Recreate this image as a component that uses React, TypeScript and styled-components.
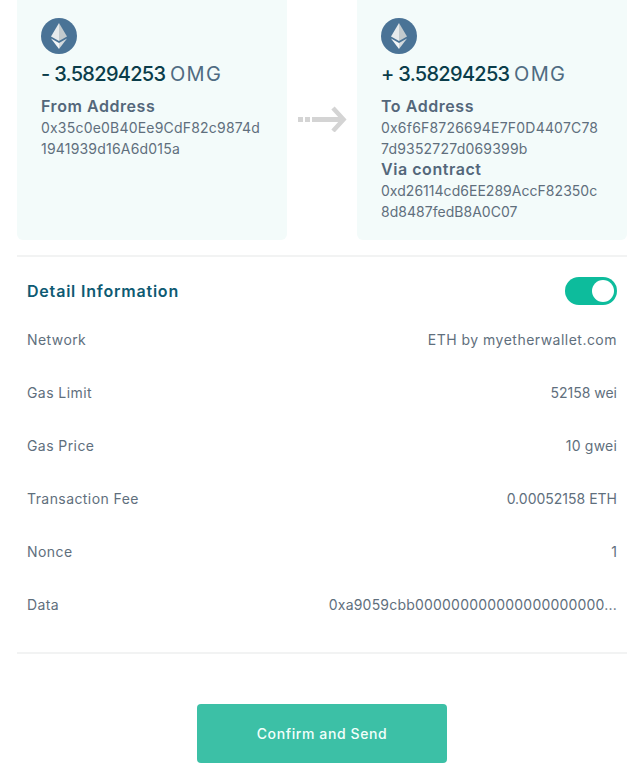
import styled, { createGlobalStyle } from "styled-components";

const GlobalStyle = createGlobalStyle`
  html, body {
    margin: 0;
    padding: 0;
    background: #fff;
    font-family: "Inter", "Liberation Sans", sans-serif;
  }
`;

const Page = styled.div`
  width: 642px;
  height: 768px;
  box-sizing: border-box;
  padding: 0 15px 0 17px;
  overflow: hidden;
`;
const Cards = styled.div`
  display: flex;
  justify-content: space-between;
  align-items: stretch;
`;
const Card = styled.div`
  width: 270px;
  height: 240px;
  box-sizing: border-box;
  padding: 18px 24px 0;
  background-color: #f3fbfa;
  border-radius: 0 0 6px 6px;
`;
const Middle = styled.div`
  flex: 1;
  display: flex;
  justify-content: center;
  padding-top: 106px;
`;
const Amount = styled.div`
  margin-top: 7px;
  height: 26px;
  line-height: 26px;
  font-size: 20px;
  font-weight: 500;
  letter-spacing: -0.7px;
  color: #0a3d4a;
  white-space: nowrap;
`;
const Unit = styled.span`
  color: #4f6b82;
  font-weight: 400;
  letter-spacing: 1.3px;
`;
const Label = styled.div<{ $first?: boolean }>`
  margin-top: ${(props) => (props.$first ? "9px" : "0")};
  height: 21px;
  line-height: 21px;
  font-size: 16px;
  font-weight: 600;
  letter-spacing: 0.55px;
  color: #54677a;
`;
const Address = styled.div<{ $spacing?: number }>`
  font-size: 14px;
  line-height: 21px;
  letter-spacing: ${(props) => props.$spacing ?? 0.2}px;
  color: #5f6f7d;
  word-break: break-all;
`;
const Divider = styled.div`
  height: 2px;
  background-color: #f2f3f3;
`;
const TopDivider = styled(Divider)`
  margin-top: 15px;
`;
const Details = styled.div`
  padding: 0 10px;
  height: 395px;
  box-sizing: border-box;
`;
const DetailHeader = styled.div`
  height: 68px;
  display: flex;
  align-items: center;
  justify-content: space-between;
`;
const DetailTitle = styled.div`
  font-size: 16px;
  font-weight: 600;
  letter-spacing: 0.8px;
  color: #0e5a72;
`;
const Toggle = styled.div`
  width: 52px;
  height: 28px;
  box-sizing: border-box;
  padding: 3px;
  border-radius: 14px;
  background-color: #0dbc9c;
  display: flex;
  justify-content: flex-end;
`;
const Knob = styled.div`
  width: 22px;
  height: 22px;
  border-radius: 50%;
  background-color: #fff;
`;
const Row = styled.div`
  height: 53px;
  display: flex;
  justify-content: space-between;
  align-items: flex-start;
  font-size: 14px;
  line-height: 30px;
  color: #5f6f7d;
`;
const Name = styled.div`
  letter-spacing: 0.42px;
`;
const Value = styled.div<{ $spacing: number }>`
  white-space: nowrap;
  letter-spacing: ${(props) => props.$spacing}px;
`;
const Footer = styled.div`
  margin-top: 50px;
  display: flex;
  justify-content: center;
`;
const SendButton = styled.button`
  width: 250px;
  height: 59px;
  border: none;
  border-radius: 4px;
  background-color: #3cc0a6;
  color: #f2fffb;
  font-family: inherit;
  font-size: 14px;
  font-weight: 500;
  letter-spacing: 0.6px;
`;

function EthIcon() {
  return (
    <svg width="36" height="36" viewBox="0 0 36 36" style={{ display: "block" }}>
      <circle cx="18" cy="18" r="18" fill="#4a7396" />
      <path d="M18 5 L10 18.5 L18 23 Z" fill="#e6eaec" />
      <path d="M18 5 L26 18.5 L18 23 Z" fill="#c2cace" />
      <path d="M10 20.5 L18 25 L18 31 Z" fill="#f4f6f7" />
      <path d="M26 20.5 L18 25 L18 31 Z" fill="#d4dadd" />
    </svg>
  );
}

function Arrow() {
  return (
    <svg width="50" height="26" viewBox="0 0 50 26">
      <g fill="#d4d4d4">
        <rect x="1" y="11" width="5" height="5" />
        <rect x="8" y="11" width="5" height="5" />
        <rect x="15" y="11" width="30" height="5" />
      </g>
      <path d="M36 2 L46.5 13.5 L36 25" fill="none" stroke="#d4d4d4" strokeWidth="4.5" />
    </svg>
  );
}

const rows: { name: string; value: string; spacing: number }[] = [
  { name: "Network", value: "ETH by myetherwallet.com", spacing: 0.48 },
  { name: "Gas Limit", value: "52158 wei", spacing: 0 },
  { name: "Gas Price", value: "10 gwei", spacing: 0.2 },
  { name: "Transaction Fee", value: "0.00052158 ETH", spacing: 0 },
  { name: "Nonce", value: "1", spacing: 0 },
  { name: "Data", value: "0xa9059cbb000000000000000000000...", spacing: 0.2 },
];

export default function App() {
  return (
    <Page>
      <GlobalStyle />
      <Cards>
        <Card>
          <EthIcon />
          <Amount>
            - 3.58294253 <Unit>OMG</Unit>
          </Amount>
          <Label $first>From Address</Label>
          <Address>0x35c0e0B40Ee9CdF82c9874d1941939d16A6d015a</Address>
        </Card>
        <Middle>
          <Arrow />
        </Middle>
        <Card>
          <EthIcon />
          <Amount>
            + 3.58294253 <Unit>OMG</Unit>
          </Amount>
          <Label $first>To Address</Label>
          <Address>0x6f6F8726694E7F0D4407C787d9352727d069399b</Address>
          <Label>Via contract</Label>
          <Address $spacing={0.03}>0xd26114cd6EE289AccF82350c8d8487fedB8A0C07</Address>
        </Card>
      </Cards>
      <TopDivider />
      <Details>
        <DetailHeader>
          <DetailTitle>Detail Information</DetailTitle>
          <Toggle>
            <Knob />
          </Toggle>
        </DetailHeader>
        {rows.map((row) => (
          <Row key={row.name}>
            <Name>{row.name}</Name>
            <Value $spacing={row.spacing}>{row.value}</Value>
          </Row>
        ))}
      </Details>
      <Divider />
      <Footer>
        <SendButton>Confirm and Send</SendButton>
      </Footer>
    </Page>
  );
}
